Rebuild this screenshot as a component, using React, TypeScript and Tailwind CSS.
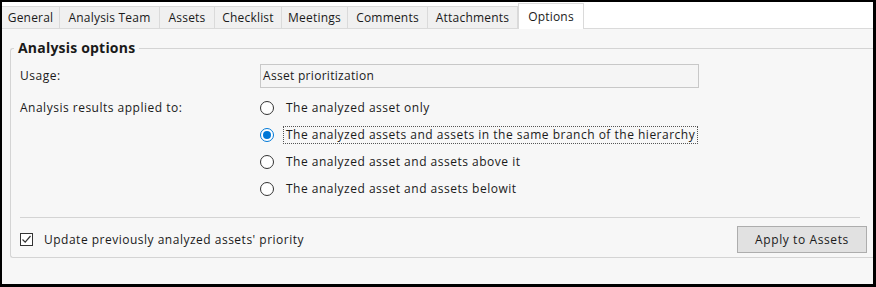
import React from "react";

const font = { fontFamily: '"Open Sans", "Noto Sans", sans-serif' };

function Radio({ checked, label, focus }: { checked?: boolean; label: string; focus?: boolean }) {
  return (
    <div className="flex items-center h-[27px]">
      <div
        className={
          "w-[14px] h-[14px] rounded-full border bg-white flex items-center justify-center " +
          (checked ? "border-[#0078d7]" : "border-[#333333]")
        }
      >
        {checked && <div className="w-[8px] h-[8px] rounded-full bg-[#0078d7]" />}
      </div>
      <div
        className={
          "ml-[9px] px-[2px] leading-[16px] text-[12px] tracking-[0.5px] text-[#1a1a1a] " +
          (focus ? "border border-dotted border-[#555]" : "border border-transparent")
        }
      >
        {label}
      </div>
    </div>
  );
}

export default function App() {
  const tabs = ["General", "Analysis Team", "Assets", "Checklist", "Meetings", "Comments", "Attachments"];
  const widths = [58, 100, 55, 67, 66, 80, 90];
  return (
    <div className="w-[876px] h-[287px] bg-black pt-[2px] pl-[2px] pr-[3px] pb-[3px]" style={font}>
      <div className="w-full h-full bg-white flex flex-col overflow-hidden">
        <div className="h-[26px] flex items-end relative">
          {tabs.map((t, i) => (
            <div
              key={t}
              style={{ width: widths[i] }}
              className="h-[22px] bg-[#f0f0f0] border-r border-t border-[#dadada] flex items-center justify-center text-[12px] tracking-[0.2px] text-[#1a1a1a]"
            >
              {t}
            </div>
          ))}
          <div className="w-[66px] h-[26px] bg-white border-l border-r border-t border-[#dadada] flex items-center justify-center text-[12px] tracking-[0.2px] text-[#1a1a1a] relative top-[1px] z-10">
            Options
          </div>
        </div>
        <div className="flex-1 bg-[#f7f7f7] border-t border-[#dadada] pl-[8px] pt-[11px]">
          <div className="relative h-[210px] border-l border-t border-b border-[#d4d4d4] rounded-l-[3px] mt-[8px]">
            <div className="absolute left-[3px] top-[-11px] px-[4px] bg-[#f7f7f7] text-[14px] tracking-[0.2px] font-bold text-[#1a1a1a] leading-[20px]">
              Analysis options
            </div>
            <div className="pl-[9px] pt-[15px] text-[12px] tracking-[0.5px] text-[#1a1a1a]">
              <div className="flex items-center h-[24px]">
                <div className="w-[240px]">Usage:</div>
                <div className="w-[439px] h-[24px] border border-[#c8c8c8] bg-[#f5f5f5] flex items-center pl-[2px] tracking-[0.3px]">
                  Asset prioritization
                </div>
              </div>
              <div className="flex mt-[6px]">
                <div className="w-[240px] h-[27px] flex items-center">Analysis results applied to:</div>
                <div className="flex flex-col">
                  <Radio label="The analyzed asset only" />
                  <Radio checked focus label="The analyzed assets and assets in the same branch of the hierarchy" />
                  <Radio label="The analyzed asset and assets above it" />
                  <Radio label="The analyzed asset and assets belowit" />
                </div>
              </div>
              <div className="mr-[13px] mt-[15px] border-t border-[#d4d4d4]" />
              <div className="flex items-center justify-between mt-[8px] mr-[6px]">
                <div className="flex items-center">
                  <div className="w-[13px] h-[13px] border border-[#333333] bg-white flex items-center justify-center">
                    <svg width="11" height="11" viewBox="0 0 11 11">
                      <path d="M1.5 5.5 L4.2 8.2 L9.5 2" fill="none" stroke="#333" strokeWidth="1.2" />
                    </svg>
                  </div>
                  <div className="ml-[11px]">Update previously analyzed assets' priority</div>
                </div>
                <div className="w-[130px] h-[27px] bg-[#e1e1e1] border border-[#adadad] flex items-center justify-center tracking-[0.6px]">
                  Apply to Assets
                </div>
              </div>
            </div>
          </div>
        </div>
      </div>
    </div>
  );
}
